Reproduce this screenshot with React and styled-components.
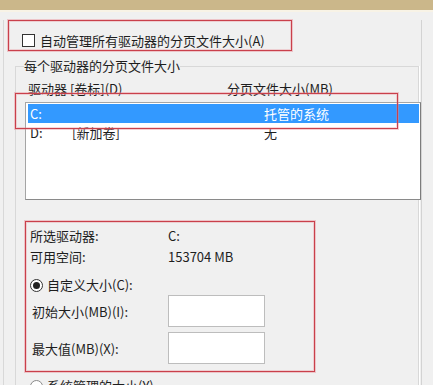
import React from 'react'
import styled, { createGlobalStyle } from 'styled-components'

const Global = createGlobalStyle`
  html, body { margin: 0; padding: 0; background: #f0f0f0; }
  body {
    font-family: "Noto Sans CJK SC", "Noto Sans", sans-serif;
    font-size: 13px;
    color: #1e1e1e;
  }
`

const Page = styled.div`
  width: 433px;
  height: 385px;
  overflow: hidden;
  background: #f0f0f0;
`

const TitleBand = styled.div`
  height: 10px;
  background: #cbb78a;
  border-bottom: 2px solid #f8f3e6;
`

const Frame = styled.div`
  margin-left: 3px;
  width: 419px;
  height: 373px;
  box-sizing: border-box;
  border-left: 1px solid #d8d8d8;
  border-right: 1px solid #d3d3d3;
`

const Mark = styled.div`
  box-sizing: border-box;
  border: 1px solid #c9404b;
  box-shadow: 0 0 0 1px rgba(232, 130, 140, 0.4), inset 0 0 0 1px rgba(232, 130, 140, 0.3);
`

const AutoBox = styled(Mark)`
  margin: 8px 0 0 4px;
  width: 284px;
  height: 31px;
  padding: 10px 0 0 13px;
  display: flex;
  align-items: center;
  gap: 5px;
  line-height: 17px;
`

const Check = styled.span`
  width: 13px;
  height: 13px;
  box-sizing: border-box;
  border: 1px solid #333;
  background: #fff;
  flex: none;
`

const GroupBox = styled.div`
  position: relative;
  margin: 15px 0 0 11px;
  width: 404px;
  height: 340px;
  box-sizing: border-box;
  border: 1px solid #d8d8d8;
  border-bottom: none;
  box-shadow: 1px 0 0 #fff;
`

const Caption = styled.div`
  width: fit-content;
  margin: -10px 0 0 8px;
  line-height: 17px;
  background: #f0f0f0;
`

const HeaderRow = styled.div`
  display: grid;
  grid-template-columns: 199px 1fr;
  margin-top: 6px;
  padding-left: 12px;
  line-height: 17px;
`

const ListBox = styled.div`
  margin: 5px 0 0 9px;
  width: 396px;
  height: 98px;
  box-sizing: border-box;
  background: #fff;
  border: 1px solid #a5a5a5;
  border-right-color: #7c7c7c;
  border-bottom-color: #8a8a8a;
  padding: 1px 1px 0 2px;
`

const DriveRow = styled.div`
  display: grid;
  grid-template-columns: 42px 192px 1fr;
  height: 19px;
  line-height: 19px;
  padding-left: 2px;
  background: ${p => (p.$selected ? '#3399ff' : 'transparent')};
  color: ${p => (p.$selected ? '#fff' : '#1e1e1e')};
`

const ListMark = styled(Mark)`
  position: absolute;
  left: -1px;
  top: 26px;
  width: 383px;
  height: 36px;
`

const SizeBox = styled(Mark)`
  margin: 21px 0 0 9px;
  width: 290px;
  height: 151px;
  padding: 5px 0 0 4px;
`

const InfoRow = styled.div`
  display: grid;
  grid-template-columns: 138px 1fr;
  line-height: 17px;
  margin-top: ${p => p.$gap || 0}px;
`

const RadioRow = styled.label`
  display: flex;
  align-items: center;
  gap: 4px;
  height: 18px;
  line-height: 18px;
  margin-top: ${p => p.$gap || 0}px;
  margin-left: ${p => p.$indent || 0}px;
`

const Radio = styled.span`
  width: 13px;
  height: 13px;
  box-sizing: border-box;
  border-radius: 50%;
  border: 1px solid ${p => (p.$on ? '#333' : '#8a8a8a')};
  background: #fff;
  display: flex;
  align-items: center;
  justify-content: center;
  flex: none;

  &::after {
    content: '';
    width: 7px;
    height: 7px;
    border-radius: 50%;
    background: ${p => (p.$on ? '#222' : 'transparent')};
  }
`

const FieldRow = styled.div`
  display: grid;
  grid-template-columns: 138px 97px;
  align-items: center;
  margin-top: ${p => p.$gap || 0}px;
`

const FieldLabel = styled.span`
  padding-left: 2px;
  line-height: 17px;
`

const Input = styled.div`
  height: 32px;
  box-sizing: border-box;
  background: #fff;
  border: 1px solid #bdbdbd;
`

export default function App() {
  return (
    <Page>
      <Global />
      <TitleBand />
      <Frame>
        <AutoBox>
          <Check />
          <span>自动管理所有驱动器的分页文件大小(A)</span>
        </AutoBox>

        <GroupBox>
          <Caption>每个驱动器的分页文件大小</Caption>
          <HeaderRow>
            <span>驱动器 [卷标](D)</span>
            <span>分页文件大小(MB)</span>
          </HeaderRow>
          <ListBox>
            <DriveRow $selected>
              <span>C:</span>
              <span></span>
              <span>托管的系统</span>
            </DriveRow>
            <DriveRow>
              <span>D:</span>
              <span>[新加卷]</span>
              <span>无</span>
            </DriveRow>
          </ListBox>
          <ListMark />

          <SizeBox>
            <InfoRow>
              <span>所选驱动器:</span>
              <span>C:</span>
            </InfoRow>
            <InfoRow $gap={4}>
              <span>可用空间:</span>
              <span>153704 MB</span>
            </InfoRow>
            <RadioRow $gap={11}>
              <Radio $on />
              <span>自定义大小(C):</span>
            </RadioRow>
            <FieldRow $gap={1}>
              <FieldLabel>初始大小(MB)(I):</FieldLabel>
              <Input />
            </FieldRow>
            <FieldRow $gap={5}>
              <FieldLabel>最大值(MB)(X):</FieldLabel>
              <Input />
            </FieldRow>
          </SizeBox>

          <RadioRow $gap={5} $indent={14}>
            <Radio />
            <span>系统管理的大小(Y)</span>
          </RadioRow>
        </GroupBox>
      </Frame>
    </Page>
  )
}
